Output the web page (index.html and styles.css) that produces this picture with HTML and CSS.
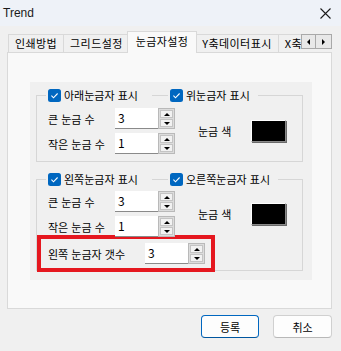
FILE: index.html
```html
<!DOCTYPE html>
<html lang="ko">
<head>
  <meta charset="UTF-8" />
  <meta name="viewport" content="width=device-width, initial-scale=1.0" />
  <title>Trend</title>
  <link rel="stylesheet" href="styles.css">
</head>
<body>
  <div class="titlebar">
    <span class="title">Trend</span>
    <svg class="close" width="11" height="11" viewBox="0 0 11 11"><path d="M0.5 0.5 L10.5 10.5 M10.5 0.5 L0.5 10.5" stroke="#1b1b1b" stroke-width="1.1" fill="none"/></svg>
  </div>

  <div class="tabbar">
    <div class="tabs">
      <div class="tab">인쇄방법</div>
      <div class="tab">그리드설정</div>
      <div class="tab active">눈금자설정</div>
      <div class="tab">Y축데이터표시</div>
      <div class="tab">X축데이터표시</div>
    </div>
    <div class="tab-scroll">
      <span class="sbtn"><i class="tri-left"></i></span>
      <span class="sbtn"><i class="tri-right"></i></span>
    </div>
  </div>

  <div class="page">
    <div class="inner">
      <div class="group">
        <div class="group-head">
          <label class="check first"><svg class="box" width="13" height="13" viewBox="0 0 13 13"><rect width="13" height="13" rx="2.5" fill="#0067c0"/><path d="M3.4 6.7 L5.5 8.8 L9.6 4.5" stroke="#fff" stroke-width="1.1" fill="none"/></svg>아래눈금자 표시</label>
          <label class="check"><svg class="box" width="13" height="13" viewBox="0 0 13 13"><rect width="13" height="13" rx="2.5" fill="#0067c0"/><path d="M3.4 6.7 L5.5 8.8 L9.6 4.5" stroke="#fff" stroke-width="1.1" fill="none"/></svg>위눈금자 표시</label>
        </div>
        <div class="group-body">
          <div class="rows">
            <div class="row">
              <span class="lbl">큰 눈금 수</span>
              <div class="spin"><span class="val">3</span><span class="btns"><span class="up"><i class="tri-up"></i></span><span class="down"><i class="tri-down"></i></span></span></div>
            </div>
            <div class="row">
              <span class="lbl">작은 눈금 수</span>
              <div class="spin"><span class="val">1</span><span class="btns"><span class="up"><i class="tri-up"></i></span><span class="down"><i class="tri-down"></i></span></span></div>
            </div>
          </div>
          <div class="color">
            <span class="color-lbl">눈금 색</span>
            <span class="swatch"></span>
          </div>
        </div>
      </div>

      <div class="group second">
        <div class="group-head">
          <label class="check first"><svg class="box" width="13" height="13" viewBox="0 0 13 13"><rect width="13" height="13" rx="2.5" fill="#0067c0"/><path d="M3.4 6.7 L5.5 8.8 L9.6 4.5" stroke="#fff" stroke-width="1.1" fill="none"/></svg>왼쪽눈금자 표시</label>
          <label class="check"><svg class="box" width="13" height="13" viewBox="0 0 13 13"><rect width="13" height="13" rx="2.5" fill="#0067c0"/><path d="M3.4 6.7 L5.5 8.8 L9.6 4.5" stroke="#fff" stroke-width="1.1" fill="none"/></svg>오른쪽눈금자 표시</label>
        </div>
        <div class="group-body">
          <div class="rows">
            <div class="row">
              <span class="lbl">큰 눈금 수</span>
              <div class="spin"><span class="val">3</span><span class="btns"><span class="up"><i class="tri-up"></i></span><span class="down"><i class="tri-down"></i></span></span></div>
            </div>
            <div class="row">
              <span class="lbl">작은 눈금 수</span>
              <div class="spin"><span class="val">1</span><span class="btns"><span class="up"><i class="tri-up"></i></span><span class="down"><i class="tri-down"></i></span></span></div>
            </div>
          </div>
          <div class="color">
            <span class="color-lbl">눈금 색</span>
            <span class="swatch"></span>
          </div>
        </div>
        <div class="highlight">
          <span class="lbl wide">왼쪽 눈금자 갯수</span>
          <div class="spin"><span class="val">3</span><span class="btns"><span class="up"><i class="tri-up"></i></span><span class="down"><i class="tri-down"></i></span></span></div>
        </div>
      </div>
    </div>
  </div>

  <div class="actions">
    <button class="btn primary">등록</button>
    <button class="btn">취소</button>
  </div>
</body>
</html>
```

FILE: styles.css
```css
body {
  margin: 0;
  width: 341px;
  height: 351px;
  background: #f0f0f0;
  font-family: "Noto Sans CJK KR", sans-serif;
  font-size: 11px;
  color: #000;
  overflow: hidden;
}

/* title bar */
.titlebar {
  height: 26px;
  background: #eef2f8;
  display: flex;
  align-items: center;
  justify-content: space-between;
  padding: 0 10px 0 3px;
}
.title {
  font-family: "Liberation Sans", sans-serif;
  font-size: 12px;
  color: #1a1a1a;
}
.close { margin-top: 1px; }

/* tabs */
.tabbar {
  display: flex;
  align-items: flex-start;
  margin-top: 5px;
  padding-left: 8px;
  position: relative;
  z-index: 1;
}
.tabs {
  width: 293px;
  height: 22px;
  display: flex;
  align-items: flex-end;
  overflow: hidden;
}
.tab {
  flex: none;
  height: 18px;
  margin-bottom: 1px;
  box-sizing: border-box;
  padding: 0 6px;
  border: 1px solid #d9d9d9;
  border-bottom: none;
  border-right: none;
  background: #f0f0f0;
  line-height: 17px;
  letter-spacing: 0.4px;
  white-space: nowrap;
}
.tab.active {
  height: 22px;
  margin: 0 -1px 0 -2px;
  padding: 0 8px;
  background: #f9f9f9;
  border-right: 1px solid #d9d9d9;
  line-height: 18px;
  position: relative;
}
.tab.active + .tab { border-left: none; }
.tab-scroll {
  display: flex;
  margin-top: 3px;
}
.sbtn {
  width: 15px;
  height: 15px;
  box-sizing: border-box;
  border: 1px solid #a9a9a9;
  background: #e8e8e8;
  display: flex;
  align-items: center;
  justify-content: center;
}
.sbtn + .sbtn { border-left: none; width: 16px; }
.tri-left { border-right: 3px solid #000; border-top: 3px solid transparent; border-bottom: 3px solid transparent; }
.tri-right { border-left: 3px solid #000; border-top: 3px solid transparent; border-bottom: 3px solid transparent; }

/* tab page */
.page {
  margin: -1px 0 0 7px;
  width: 325px;
  height: 257px;
  box-sizing: border-box;
  border: 1px solid #d9d9d9;
  background: #f9f9f9;
  padding: 29px 0 0 22px;
}
.inner {
  width: 282px;
  height: 198px;
  box-sizing: border-box;
  background: #f0f0f0;
  padding: 13px 0 0 6px;
}

/* group boxes */
.group {
  width: 267px;
  box-sizing: border-box;
  border: 1px solid #d6d6d6;
  padding: 0 0 7px 11px;
}
.group.second {
  margin-top: 17px;
  padding-bottom: 0;
}
.group-head {
  display: flex;
  margin-top: -7px;
  height: 13px;
}
.check {
  display: flex;
  align-items: center;
  gap: 3px;
  background: #f0f0f0;
  padding: 0 8px 0 2px;
  line-height: 13px;
  white-space: nowrap;
}
.check.first {
  width: 106px;
  box-sizing: border-box;
  margin-left: -2px;
  margin-right: 16px;
}
.box { flex: none; }
.group-body {
  display: flex;
  align-items: center;
  margin-top: 6px;
}
.second .group-body { margin-top: 5px; }
.rows {
  display: flex;
  flex-direction: column;
  gap: 4px;
}
.row {
  display: flex;
  align-items: center;
}
.lbl {
  width: 67px;
  white-space: nowrap;
}
.lbl.wide { width: 99px; }

/* spin box */
.spin {
  display: flex;
  height: 21px;
}
.val {
  width: 43px;
  box-sizing: border-box;
  background: #fff;
  border-bottom: 1px solid #8a8a8a;
  padding: 2px 0 0 3px;
  font-size: 12px;
  line-height: 16px;
}
.btns {
  width: 17px;
  box-sizing: border-box;
  border: 1px solid #b9b9b9;
  display: flex;
  flex-direction: column;
  background: #dcdcdc;
}
.btns span {
  flex: 1;
  margin: 1px;
  background: #f2f2f2;
  border: 1px solid #c4c4c4;
  display: flex;
  align-items: center;
  justify-content: center;
}
.btns .down { margin-top: 0; }
.tri-up { border-bottom: 3px solid #000; border-left: 3px solid transparent; border-right: 3px solid transparent; }
.tri-down { border-top: 3px solid #000; border-left: 3px solid transparent; border-right: 3px solid transparent; }

/* colour picker */
.color {
  display: flex;
  align-items: center;
  margin-left: 23px;
}
.color-lbl { width: 53px; }
.swatch {
  width: 35px;
  height: 22px;
  box-sizing: border-box;
  background: #000;
  border: 1px solid;
  border-color: #fff #8a8a8a #8a8a8a #fff;
  box-shadow: 1px 1px 0 #6a6a6a;
}

/* highlighted row */
.highlight {
  display: flex;
  align-items: center;
  width: 178px;
  height: 37px;
  box-sizing: border-box;
  border: 4px solid #e5171f;
  margin: -2px 0 -2px -11px;
  padding: 0 6px 0 7px;
}

/* dialog buttons */
.actions {
  display: flex;
  justify-content: flex-end;
  gap: 14px;
  margin-top: 6px;
  padding-right: 9px;
}
.btn {
  width: 59px;
  height: 23px;
  background: #fdfdfd;
  border: 1px solid #d0d0d0;
  border-bottom-color: #b8b8b8;
  border-radius: 4px;
  font-family: "Noto Sans CJK KR", sans-serif;
  font-size: 11px;
  padding: 0;
}
.btn.primary {
  width: 58px;
  border-color: #0067c0;
  border-bottom-color: #00569f;
}
```
